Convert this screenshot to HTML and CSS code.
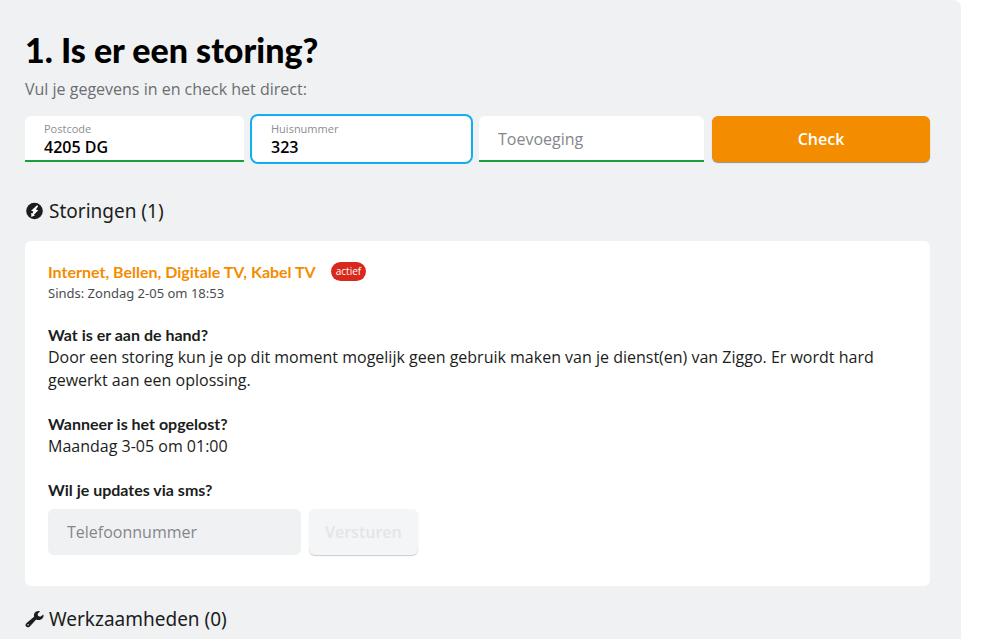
FILE: index.html
```
<!DOCTYPE html>
<html lang="nl">

<head>
    <meta charset="UTF-8">
    <meta name="viewport" content="width=device-width, initial-scale=1.0">
    <title>Is er een storing?</title>
    <link rel="stylesheet" href="styles.css">
</head>

<body>
    <div class="page">
        <main class="panel">
            <h1>1. Is er een storing?</h1>
            <p class="intro">Vul je gegevens in en check het direct:</p>

            <form class="check-form">
                <div class="field">
                    <label for="postcode">Postcode</label>
                    <input type="text" id="postcode" name="postcode" value="4205 DG">
                </div>
                <div class="field active">
                    <label for="huisnummer">Huisnummer</label>
                    <input type="text" id="huisnummer" name="huisnummer" value="323">
                </div>
                <div class="field">
                    <input type="text" id="toevoeging" name="toevoeging" placeholder="Toevoeging" aria-label="Toevoeging">
                </div>
                <button type="submit" class="btn">Check</button>
            </form>

            <h2>
                <svg class="icon" viewBox="0 0 18 18" aria-hidden="true">
                    <circle cx="9" cy="9" r="8.3" fill="#1b1d20"/>
                    <path d="M11.800 3L5.600 8.800l2.300.7-.9 2-1.300-.4.100 4 3.800-1.900-1.300-.5 4.500-4.400-2.400-.9 2.100-3z" fill="#fff"/>
                </svg>
                Storingen (1)
            </h2>

            <section class="card">
                <div class="card-title">
                    <h3>Internet, Bellen, Digitale TV, Kabel TV</h3>
                    <span class="badge">actief</span>
                </div>
                <p class="since">Sinds: Zondag 2-05 om 18:53</p>

                <h4>Wat is er aan de hand?</h4>
                <p>Door een storing kun je op dit moment mogelijk geen gebruik maken van je dienst(en) van Ziggo. Er wordt hard gewerkt aan een oplossing.</p>

                <h4>Wanneer is het opgelost?</h4>
                <p>Maandag 3-05 om 01:00</p>

                <h4><label for="telefoon">Wil je updates via sms?</label></h4>
                <form class="sms-form">
                    <input type="tel" id="telefoon" name="telefoon" placeholder="Telefoonnummer">
                    <button type="submit" class="btn" disabled>Versturen</button>
                </form>
            </section>

            <h2>
                <svg class="icon" viewBox="0 0 18 18" aria-hidden="true">
                    <path fill="#1b1d20" fill-rule="evenodd" d="M14.500 1.200C12 .500 9.300 1.700 8.600 4.100c-.3 1-.2 1.800 0 2.600L1.100 12.900c-1.300 1.100-1.400 2.700-.5 3.700 1 1.100 2.600 1 3.700-.2l6.400-6.900c2.200 1.100 5 .6 6.400-1.200.9-1.100 1.100-2.400.8-3.700l-3.100 2.200-2.200-.7-.5-2.200zM2.600 14a.7.7 0 1 1 0 1.400.7.7 0 0 1 0-1.400z"/>
                </svg>
                Werkzaamheden (0)
            </h2>
        </main>
    </div>
</body>

</html>
```
FILE: styles.css
```
* {
    box-sizing: border-box;
}

body {
    margin: 0;
    font-family: "Open Sans", sans-serif;
    font-size: 16px;
    line-height: 23px;
    color: #1b1d20;
    background: #fff;
}

h1, h2, h3, h4, p {
    margin: 0;
}

.page {
    padding-right: 39px;
    overflow: hidden;
}

.panel {
    min-height: 100vh;
    padding: 29px 31px 0 25px;
    background: #f0f1f3;
    border-top-right-radius: 8px;
}

h1 {
    font-family: Lato, sans-serif;
    font-size: 34px;
    font-weight: 900;
    line-height: 42px;
    color: #000;
}

.intro {
    margin-top: 7px;
    color: #6b6e72;
}

.check-form {
    display: grid;
    grid-template-columns: 219fr 219fr 225fr 218fr;
    gap: 8px;
    margin-top: 15px;
}

.field {
    display: flex;
    flex-direction: column;
    justify-content: center;
    height: 46px;
    padding: 1px 19px 0;
    background: #fff;
    border-bottom: 2px solid #1a9f38;
    border-radius: 6px 6px 0 0;
}

.field label {
    font-size: 11px;
    line-height: 16px;
    color: #8b8e92;
}

.field input {
    width: 100%;
    padding: 0;
    border: none;
    outline: none;
    background: none;
    font: 600 16px/20px "Open Sans", sans-serif;
    color: #000;
}

.field input::placeholder,
.sms-form input::placeholder {
    font-weight: 400;
    color: #84878b;
    opacity: 1;
}

.field.active {
    border-bottom-color: #fff;
    border-radius: 6px;
    box-shadow: 0 0 0 2px #12aeef;
}

.btn {
    height: 46px;
    padding: 0 16px;
    border: none;
    border-radius: 6px;
    background: #f48c00;
    box-shadow: 0 1px 1px rgba(0, 0, 0, 0.4);
    font: 600 16px/23px "Open Sans", sans-serif;
    color: #fff;
    cursor: pointer;
}

.btn:disabled {
    background: #f4f5f6;
    box-shadow: 0 1px 1px rgba(0, 0, 0, 0.2);
    color: #e3e5e7;
    cursor: default;
}

h2 {
    display: flex;
    align-items: center;
    gap: 5px;
    margin-top: 35px;
    font-family: "Noto Sans", sans-serif;
    font-size: 19px;
    font-weight: 400;
    line-height: 28px;
}

.icon {
    width: 19px;
    height: 18px;
}

.card {
    margin-top: 16px;
    padding: 19px 23px 31px;
    background: #fff;
    border-radius: 6px;
}

.card + h2 {
    margin-top: 19px;
}

.card-title {
    display: flex;
    align-items: center;
    gap: 15px;
}

h3, h4 {
    font-family: Lato, sans-serif;
    font-size: 16px;
    font-weight: 700;
    line-height: 23px;
}

h3 {
    color: #f48c00;
}

h4 {
    margin-top: 20px;
}

.badge {
    padding: 0 5px;
    border-radius: 10px;
    background: #d9291c;
    font-size: 10px;
    line-height: 19px;
    color: #fff;
}

.since {
    font-family: "Noto Sans", sans-serif;
    font-size: 13px;
    line-height: 20px;
    color: #4a4d50;
}

.sms-form {
    display: flex;
    gap: 8px;
    margin-top: 8px;
}

.sms-form input {
    width: 253px;
    height: 46px;
    padding: 0 19px;
    border: none;
    border-radius: 6px;
    background: #f0f1f3;
    font: 400 16px/20px "Open Sans", sans-serif;
}
```
